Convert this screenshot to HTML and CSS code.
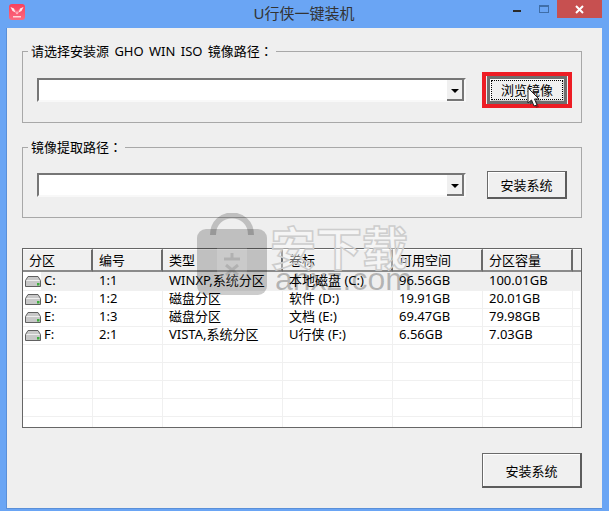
FILE: index.html
```html
<!DOCTYPE html>
<html lang="en">
<head>
    <meta charset="UTF-8">
    <title>U行侠一键装机</title>
    <link rel="stylesheet" href="styles.css">
</head>
<body>
    <div class="window">
        <div class="titlebar">
            <svg class="logo" viewBox="0 0 16 16" width="16" height="16">
                <defs>
                    <linearGradient id="logo-bg" x1="0" y1="0" x2="0" y2="1">
                        <stop offset="0" stop-color="#f9405c"/>
                        <stop offset="1" stop-color="#fb6a80"/>
                    </linearGradient>
                </defs>
                <rect width="16" height="16" rx="3" fill="url(#logo-bg)"/>
                <path d="M1.500 3 L5 4.500 L6.500 8.500 L3.500 7 Z M14.500 3 L11 4.500 L9.500 8.500 L12.500 7 Z" fill="#ffe6ea"/>
                <path d="M6.800 5.500 L8 9.500 L9.200 5.500 L9.400 9 L8 10.500 L6.600 9 Z" fill="#ffc2cc"/>
                <rect x="4" y="12" width="8" height="1.500" fill="#ffd5db"/>
            </svg>
            <div class="title">U行侠一键装机</div>
            <div class="controls">
                <span class="min"></span>
                <span class="max"></span>
                <span class="close">
                    <svg viewBox="0 0 9 9" width="9" height="9"><path d="M1 1 L8 8 M8 1 L1 8" stroke="#fff" stroke-width="2"/></svg>
                </span>
            </div>
        </div>

        <div class="client">
            <fieldset class="group group-first">
                <legend>请选择安装源 GHO WIN ISO 镜像路径：</legend>
                <div class="row">
                    <div class="combo"><div class="combo-arrow"></div></div>
                    <div class="btn-slot highlight">
                        <button class="btn btn-default"><span class="focus">浏览镜像</span></button>
                    </div>
                </div>
            </fieldset>

            <fieldset class="group group-second">
                <legend>镜像提取路径：</legend>
                <div class="row">
                    <div class="combo"><div class="combo-arrow"></div></div>
                    <div class="btn-slot">
                        <button class="btn">安装系统</button>
                    </div>
                </div>
            </fieldset>

            <div class="list">
                <table>
                    <thead>
                        <tr>
                            <th class="col-part">分区</th>
                            <th class="col-num">编号</th>
                            <th class="col-type">类型</th>
                            <th class="col-label">卷标</th>
                            <th class="col-free">可用空间</th>
                            <th class="col-size">分区容量</th>
                            <th class="col-rest"></th>
                        </tr>
                    </thead>
                    <tbody>
                        <tr class="selected">
                            <td class="drive-cell"><svg class="drive" viewBox="0 0 16 11" width="16" height="11"><use href="#drive-icon"/></svg>C:</td>
                            <td>1:1</td><td>WINXP,系统分区</td><td>本地磁盘 (C:)</td><td>96.56GB</td><td>100.01GB</td><td></td>
                        </tr>
                        <tr>
                            <td class="drive-cell"><svg class="drive" viewBox="0 0 16 11" width="16" height="11"><use href="#drive-icon"/></svg>D:</td>
                            <td>1:2</td><td>磁盘分区</td><td>软件 (D:)</td><td>19.91GB</td><td>20.01GB</td><td></td>
                        </tr>
                        <tr>
                            <td class="drive-cell"><svg class="drive" viewBox="0 0 16 11" width="16" height="11"><use href="#drive-icon"/></svg>E:</td>
                            <td>1:3</td><td>磁盘分区</td><td>文档 (E:)</td><td>69.47GB</td><td>79.98GB</td><td></td>
                        </tr>
                        <tr>
                            <td class="drive-cell"><svg class="drive" viewBox="0 0 16 11" width="16" height="11"><use href="#drive-icon"/></svg>F:</td>
                            <td>2:1</td><td>VISTA,系统分区</td><td>U行侠 (F:)</td><td>6.56GB</td><td>7.03GB</td><td></td>
                        </tr>
                        <tr><td></td><td></td><td></td><td></td><td></td><td></td><td></td></tr>
                        <tr><td></td><td></td><td></td><td></td><td></td><td></td><td></td></tr>
                        <tr><td></td><td></td><td></td><td></td><td></td><td></td><td></td></tr>
                        <tr><td></td><td></td><td></td><td></td><td></td><td></td><td></td></tr>
                        <tr><td></td><td></td><td></td><td></td><td></td><td></td><td></td></tr>
                    </tbody>
                </table>
            </div>

            <div class="footer">
                <button class="btn btn-large">安装系统</button>
            </div>
        </div>

        <!-- cursor over the browse button -->
        <svg class="cursor" viewBox="0 0 15 22" width="15" height="22">
            <path d="M3 3 L3 18 L6.500 15 L9 21 L12 20 L9.500 14 L14 14 Z" fill="#000" opacity="0.3"/>
            <path d="M1 1 L1 16 L4.500 13 L7 19 L10 18 L7.500 12 L12 12 Z" fill="#fff" stroke="#222" stroke-width="1"/>
        </svg>

        <!-- site watermark -->
        <div class="watermark">
            <svg class="wm-bag" viewBox="0 0 72 82" width="72" height="82">
                <path d="M17 22 C17 -4 55 -4 55 22" fill="none" stroke="#000" stroke-opacity="0.2" stroke-width="6"/>
                <rect x="1" y="16" width="70" height="66" rx="9" fill="#000" fill-opacity="0.2"/>
                <path d="M21 35 L51 35 L51 58 C51 66 42 70 36 73 C30 70 21 66 21 58 Z" fill="#fff" fill-opacity="0.16"/>
                <path d="M28 46 L44 46 M36 40 L36 46 M30 52 L42 62 M42 52 L30 62" stroke="#000" stroke-opacity="0.12" stroke-width="3" fill="none"/>
            </svg>
            <div class="wm-cn">安下载</div>
            <div class="wm-en">anxz.com</div>
        </div>
    </div>

    <svg class="defs" width="0" height="0">
        <symbol id="drive-icon" viewBox="0 0 16 11">
            <path d="M3 0.500 L13 0.500 L15.500 4.500 L15.500 10.500 L0.500 10.500 L0.500 4.500 Z" fill="#c8c8c8" stroke="#606060"/>
            <path d="M1.500 4.500 L14.500 4.500" stroke="#eeeeee"/>
            <rect x="12" y="7" width="2.500" height="2.500" fill="#3fae3f"/>
        </symbol>
    </svg>
</body>
</html>
```

FILE: styles.css
```css
body {
    margin: 0;
    font-family: "Noto Sans", "Noto Sans CJK SC", sans-serif;
    font-size: 13px;
    color: #000;
}

.window {
    position: relative;
    width: 609px;
    height: 511px;
    box-sizing: border-box;
    padding: 0 7px 2px 6px;
    background-color: #6aa5f4;
    overflow: hidden;
}

.defs {
    position: absolute;
}

/* title bar */
.titlebar {
    position: relative;
    height: 28px;
    display: flex;
    justify-content: center;
    align-items: center;
}

.logo {
    position: absolute;
    left: 3px;
    top: 4px;
}

.title {
    font-size: 15px;
    line-height: 20px;
    color: #333;
    margin-top: -2px;
}

.controls {
    position: absolute;
    right: 0;
    top: 0;
    display: flex;
}

.controls span {
    display: block;
}

.min {
    width: 8px;
    height: 2px;
    margin: 10px 18px 0 0;
    background-color: #2a2a2a;
}

.max {
    width: 8px;
    height: 5px;
    margin: 5px 8px 0 0;
    border: 1px solid #3f6ea8;
    border-top-width: 2px;
}

.close {
    width: 45px;
    height: 18px;
    display: flex !important;
    justify-content: center;
    align-items: center;
    background-color: #c75050;
}

/* main area */
.client {
    height: 481px;
    box-sizing: border-box;
    padding: 14px 20px 0 15px;
    background-color: #efefef;
    border-left: 1px solid #5a8fd8;
    border-bottom: 1px solid #5a8fd8;
}

.group {
    margin: 0;
    border: 1px solid #a8a8a8;
    padding: 0 9px 14px 14px;
}

.group legend {
    margin-left: -9px;
    padding: 0 3px 0 3px;
    height: 18px;
    line-height: 18px;
    font-family: "Noto Sans", "Noto Sans CJK TC", sans-serif;
    word-spacing: 2px;
}

.group-second {
    margin-top: 15px;
}

.row {
    display: flex;
    justify-content: space-between;
    align-items: center;
    padding-top: 12px;
}

.group-second .row {
    padding-top: 11px;
}

.combo {
    width: 429px;
    height: 24px;
    box-sizing: border-box;
    position: relative;
    background-color: #fff;
    border: 2px solid;
    border-color: #767676 #f8f8f8 #f8f8f8 #767676;
    display: flex;
    justify-content: flex-end;
}

.combo-arrow {
    width: 17px;
    height: 21px;
    box-sizing: border-box;
    background-color: #f0f0f0;
    border-right: 2px solid #767676;
    border-bottom: 2px solid #767676;
    position: relative;
}

.combo-arrow::after {
    content: "";
    position: absolute;
    left: 4px;
    top: 9px;
    border-left: 4px solid transparent;
    border-right: 4px solid transparent;
    border-top: 4px solid #000;
}

.btn-slot {
    width: 90px;
    height: 36px;
    box-sizing: border-box;
    display: flex;
    justify-content: center;
    align-items: center;
    border: 4px solid transparent;
}

.btn-slot.highlight {
    border-color: #ed1c24;
}

.btn {
    width: 80px;
    height: 28px;
    padding: 0;
    font: inherit;
    color: #000;
    background-color: #f0f0f0;
    border: 1px solid;
    border-color: #6a6a6a #5c5c5c #5c5c5c #6a6a6a;
    border-right-width: 2px;
    border-bottom-width: 2px;
    box-shadow: inset 1px 1px 0 #fff;
}

.btn-default {
    border-width: 3px;
    border-color: #6e6e6e;
    box-shadow: inset 1px 1px 0 #fff, inset -1px -1px 0 #d0d0d0;
}

.focus {
    display: block;
    margin: 1px;
    line-height: 18px;
    border: 1px dotted #000;
}

/* partition list */
.list {
    margin-top: 30px;
    height: 180px;
    box-sizing: border-box;
    background-color: #fff;
    border: 1px solid #666;
    overflow: hidden;
}

.list table {
    width: 558px;
    table-layout: fixed;
    border-collapse: separate;
    border-spacing: 0;
}

.list th {
    height: 19px;
    padding: 0 0 1px 6px;
    line-height: 18px;
    font-weight: normal;
    text-align: left;
    background-color: #f0f0f0;
    border-top: 1px solid #fff;
    border-right: 2px solid #6a6a6a;
    border-bottom: 2px solid #8a8a8a;
}

.list th.col-rest {
    border-right: none;
    padding: 0;
}

.col-part { width: 62px; }
.col-num { width: 62px; }
.col-type { width: 112px; }
.col-label { width: 102px; }
.col-free { width: 82px; }
.col-size { width: 82px; }

.list td {
    height: 15px;
    padding: 0 0 2px 6px;
    line-height: 15px;
    white-space: nowrap;
    border-right: 1px solid #f0f0f0;
    border-bottom: 1px solid #f0f0f0;
}

.list tbody tr:first-child td {
    height: 16px;
    line-height: 16px;
}

.selected td {
    background-color: #efefef;
    border-right-color: #efefef;
}

.list td.drive-cell {
    padding-left: 2px;
}

.selected td.drive-cell {
    background: linear-gradient(90deg, #fff 18px, #efefef 18px);
}

.drive {
    vertical-align: -2px;
    margin-right: 3px;
}

.footer {
    margin-top: 25px;
    display: flex;
    justify-content: flex-end;
}

.btn-large {
    width: 100px;
    height: 35px;
}

/* overlays */
.cursor {
    position: absolute;
    left: 527px;
    top: 87px;
}

.watermark {
    position: absolute;
    left: 196px;
    top: 213px;
    width: 210px;
    height: 84px;
    pointer-events: none;
}

.wm-bag {
    position: absolute;
    left: 0;
    top: 0;
}

.wm-cn {
    position: absolute;
    left: 74px;
    top: 6px;
    font-size: 46px;
    line-height: 56px;
    font-weight: bold;
    color: rgba(255, 255, 255, 0.4);
    -webkit-text-stroke: 1.5px #cdcdcd;
    white-space: nowrap;
}

.wm-en {
    position: absolute;
    left: 79px;
    top: 48px;
    font-size: 32px;
    line-height: 36px;
    font-family: "Liberation Sans", sans-serif;
    color: rgba(0, 0, 0, 0.25);
    white-space: nowrap;
}
```
